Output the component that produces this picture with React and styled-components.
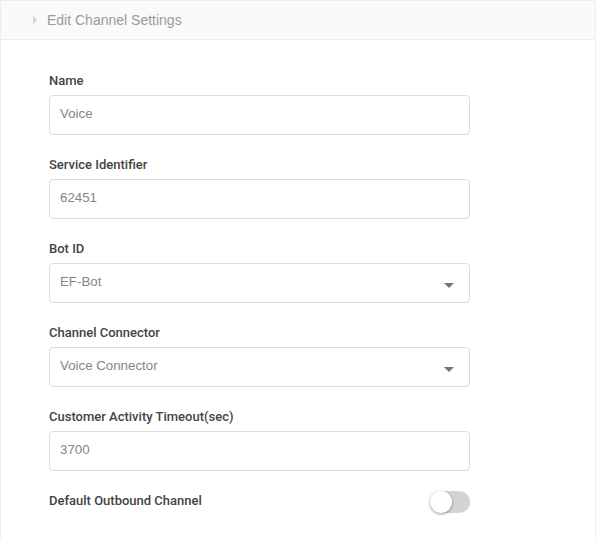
import React, { useState } from 'react';
import styled, { createGlobalStyle } from 'styled-components';

const GlobalStyle = createGlobalStyle`
  body {
    margin: 0;
    background: #fff;
    font-family: Roboto, 'Liberation Sans', sans-serif;
  }
`;

const Card = styled.div`
  width: 596px;
  height: 538px;
  border-left: 1px solid #ececec;
  border-right: 1px solid #ececec;
  box-sizing: border-box;
  overflow: hidden;
`;

const Header = styled.div`
  display: flex;
  align-items: center;
  height: 40px;
  box-sizing: border-box;
  background: #fafafa;
  border-top: 1px solid #ececec;
  border-bottom: 1px solid #ececec;
  padding-left: 32px;
  color: #9a9a9a;
  font-family: 'Liberation Sans', Arial, sans-serif;
  font-size: 14px;
`;

const Caret = styled.span`
  width: 0;
  height: 0;
  border-top: 4px solid transparent;
  border-bottom: 4px solid transparent;
  border-left: 4px solid #d4d4d4;
  margin-right: 10px;
`;

const Form = styled.div`
  display: flex;
  flex-direction: column;
  gap: 22px;
  padding: 33px 0 0 48px;
  width: 421px;
`;

const Field = styled.div`
  display: flex;
  flex-direction: column;
`;

const Label = styled.label`
  font-size: 13px;
  line-height: 15px;
  font-weight: 500;
  color: #444;
  margin-bottom: ${(p) => (p.inline ? '0' : '7px')};
`;

const Box = styled.div`
  position: relative;
  display: flex;
  align-items: center;
  height: 40px;
  box-sizing: border-box;
  border: 1px solid #dcdcdc;
  border-radius: 4px;
  padding: 0 10px 3px;
  font-family: 'Liberation Sans', Arial, sans-serif;
  font-size: 13.3px;
  color: #858585;
`;

const Arrow = styled.span`
  position: absolute;
  right: 15px;
  top: 50%;
  width: 0;
  height: 0;
  border-left: 5px solid transparent;
  border-right: 5px solid transparent;
  border-top: 5px solid #757575;
`;

const SwitchRow = styled.div`
  display: flex;
  align-items: center;
  justify-content: space-between;
  margin-top: -5px;
`;

const Track = styled.button`
  position: relative;
  width: 40px;
  height: 22px;
  margin-top: 3px;
  padding: 0;
  border: none;
  border-radius: 11px;
  background: ${(p) => (p.on ? '#4caf50' : '#d4d4d4')};
  cursor: pointer;
`;

const Knob = styled.span`
  position: absolute;
  top: 0;
  left: ${(p) => (p.on ? '18px' : '0')};
  width: 22px;
  height: 22px;
  border-radius: 50%;
  background: #fff;
  box-shadow: 0 1px 3px rgba(0, 0, 0, 0.4);
`;

const fields = [
  { label: 'Name', value: 'Voice' },
  { label: 'Service Identifier', value: '62451' },
  { label: 'Bot ID', value: 'EF-Bot', select: true },
  { label: 'Channel Connector', value: 'Voice Connector', select: true },
  { label: 'Customer Activity Timeout(sec)', value: '3700' },
];

const App = () => {
  const [outbound, setOutbound] = useState(false);

  return (
    <Card>
      <GlobalStyle />
      <Header>
        <Caret />
        Edit Channel Settings
      </Header>
      <Form>
        {fields.map((f) => (
          <Field key={f.label}>
            <Label>{f.label}</Label>
            <Box>
              {f.value}
              {f.select && <Arrow />}
            </Box>
          </Field>
        ))}
        <SwitchRow>
          <Label as="span" inline>Default Outbound Channel</Label>
          <Track on={outbound ? 1 : 0} onClick={() => setOutbound(!outbound)}>
            <Knob on={outbound ? 1 : 0} />
          </Track>
        </SwitchRow>
      </Form>
    </Card>
  );
};

export default App;
